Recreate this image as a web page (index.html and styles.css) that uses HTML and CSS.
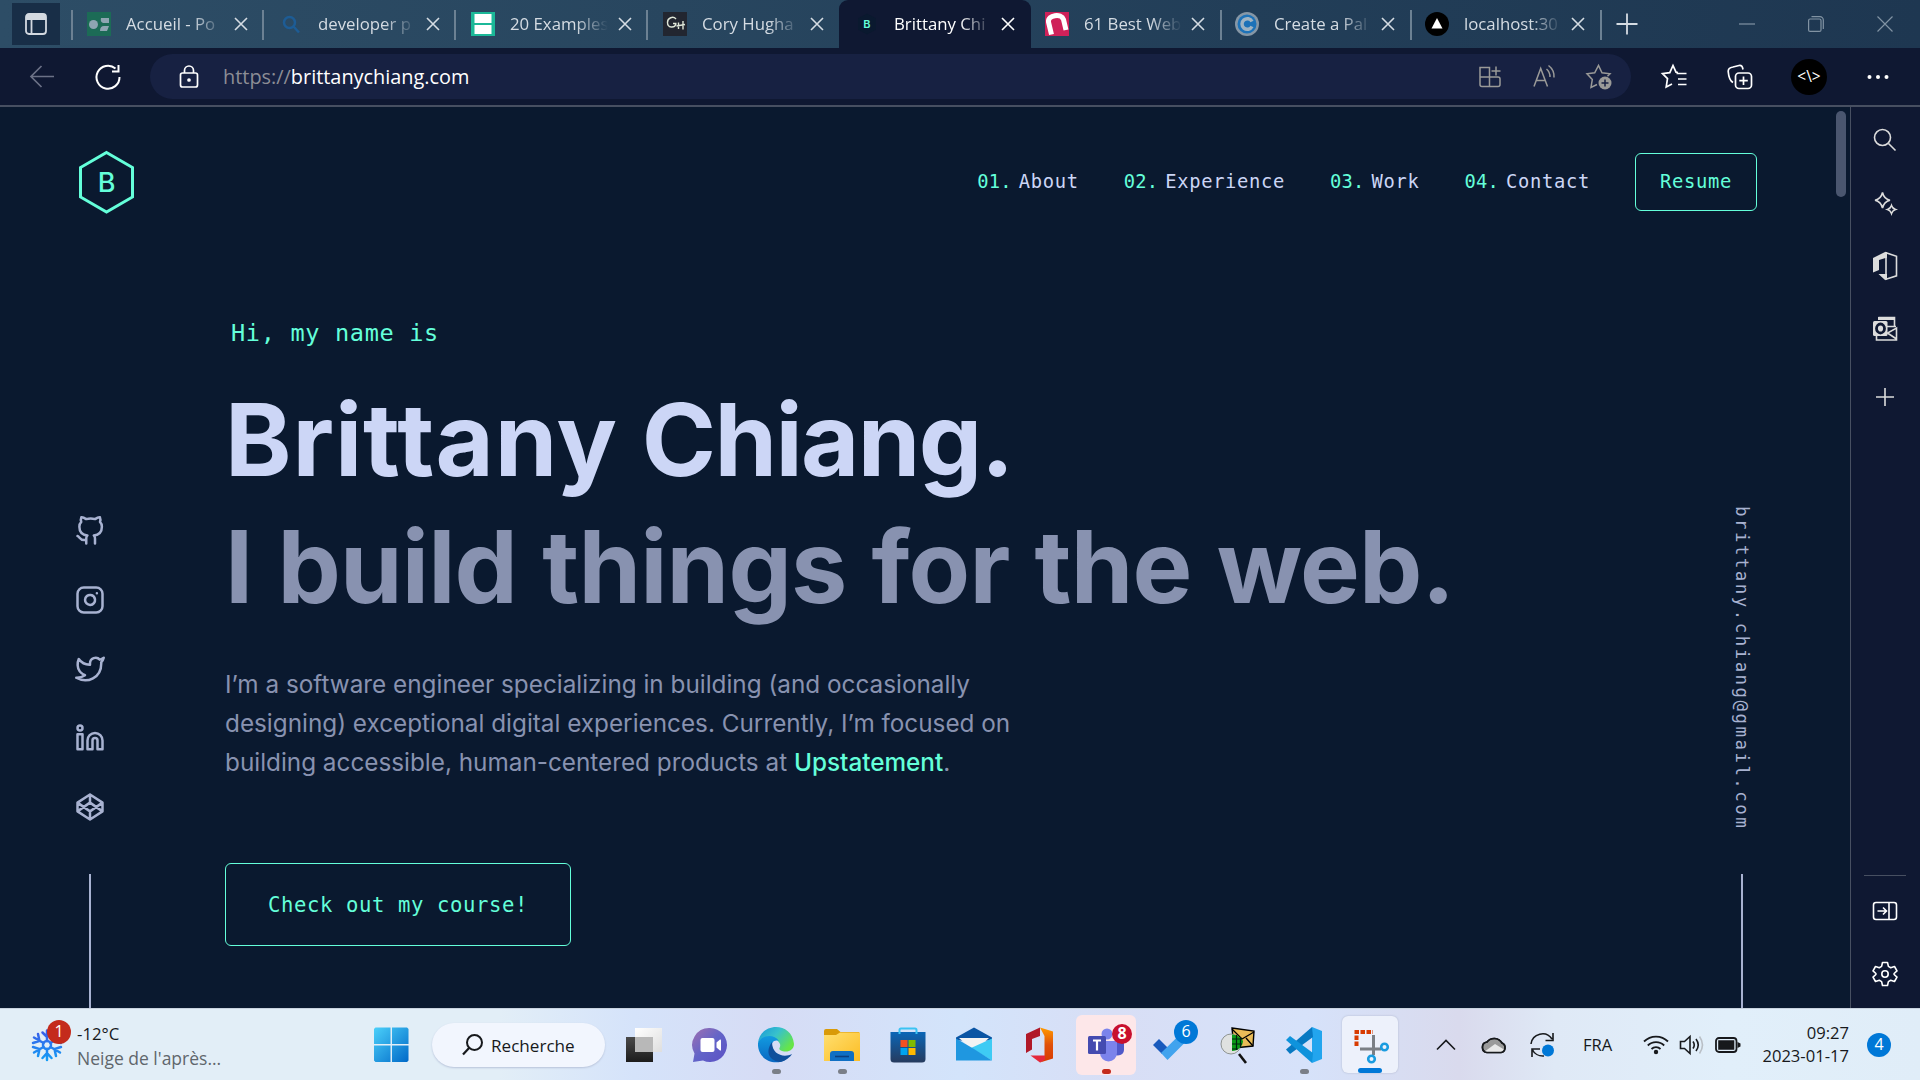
FILE: index.html
```html
<!DOCTYPE html>
<html lang="en">
<head>
<meta charset="utf-8">
<title>Brittany Chiang</title>
<link rel="stylesheet" href="styles.css">
</head>
<body>
<div class="tabstrip">
  <div class="tab-actions"><svg width="24" height="24" viewBox="0 0 24 24"><rect x="2" y="2" width="20" height="20" rx="3" fill="none" stroke="#d3d9e0" stroke-width="1.8"/><path d="M2 5a3 3 0 0 1 3-3h14a3 3 0 0 1 3 3v3H2z" fill="#d3d9e0"/><path d="M7.500 8v14" stroke="#d3d9e0" stroke-width="1.800"/></svg></div>
  <div class="tab">
    <svg class="favicon" viewBox="0 0 24 24"><path fill="#1c6b56" d="M0 0h24v24H0z"/><circle cx="6.500" cy="12.500" r="4.500" fill="#8ea5b2"/><path fill="#8ea5b2" d="M14 6h8v5h-6q-3-1-2-5zM13 19q0-5 4-5h5l-2 5z"/></svg>
    <span class="tab-title">Accueil - Po</span><svg class="close" viewBox="0 0 14 14"><path d="M1 1l12 12M13 1L1 13"/></svg>
  </div>
  <div class="tab">
    <svg class="favicon" viewBox="0 0 24 24"><g fill="none" stroke="#1d5c95" stroke-width="2.500"><circle cx="10.500" cy="10.500" r="5.500"/><path d="M14.500 14.500l5.500 6"/></g></svg>
    <span class="tab-title">developer p</span><svg class="close" viewBox="0 0 14 14"><path d="M1 1l12 12M13 1L1 13"/></svg>
  </div>
  <div class="tab">
    <svg class="favicon" viewBox="0 0 24 24"><path fill="#1bb898" d="M0 0h24v24H0z"/><path fill="#fff" d="M3.500 2h17v9h-17zM3.500 13h17v9h-17z"/></svg>
    <span class="tab-title">20 Examples</span><svg class="close" viewBox="0 0 14 14"><path d="M1 1l12 12M13 1L1 13"/></svg>
  </div>
  <div class="tab no-sep">
    <svg class="favicon" viewBox="0 0 24 24"><path fill="#222630" d="M0 0h24v24H0z"/><path d="M13 7C10 3.500 4.500 6 4.500 10.500c0 5.500 7 6 8.500 1.500M10 11.500h3.500M15.500 10.500v6.500M20 9v8.500M13.500 14l8.500-1.500" fill="none" stroke="#dfe7d8" stroke-width="1.400"/></svg>
    <span class="tab-title">Cory Hugha</span><svg class="close" viewBox="0 0 14 14"><path d="M1 1l12 12M13 1L1 13"/></svg>
  </div>
  <div class="tab active no-sep">
    <svg class="favicon" viewBox="0 0 24 24"><path d="M12 1.500l9 5v11l-9 5-9-5v-11z" fill="#0a192f"/><text x="12" y="16.300" class="fav-b">B</text></svg>
    <span class="tab-title">Brittany Chi</span><svg class="close" viewBox="0 0 14 14"><path d="M1 1l12 12M13 1L1 13"/></svg>
  </div>
  <div class="tab narrow">
    <svg class="favicon" viewBox="0 0 24 24"><path fill="#cf2159" d="M0 0h24v24H0z"/><path d="M6.500 22.500L3.500 10C2.500 3 16.500 1 18.500 7.500L21 18" fill="none" stroke="#fff" stroke-width="5"/></svg>
    <span class="tab-title">61 Best Web</span><svg class="close" viewBox="0 0 14 14"><path d="M1 1l12 12M13 1L1 13"/></svg>
  </div>
  <div class="tab narrow">
    <svg class="favicon" viewBox="0 0 24 24"><circle cx="12" cy="12" r="12" fill="#8697a6"/><circle cx="12" cy="12" r="9.500" fill="#1d72b8"/><path d="M17 9.500a5.300 5.300 0 1 0 0 5" fill="none" stroke="#9fb3c2" stroke-width="3.500"/></svg>
    <span class="tab-title">Create a Pal</span><svg class="close" viewBox="0 0 14 14"><path d="M1 1l12 12M13 1L1 13"/></svg>
  </div>
  <div class="tab narrow">
    <svg class="favicon" viewBox="0 0 24 24"><circle cx="12" cy="12" r="12"/><path fill="#fff" d="M12 6l5.500 10.500h-11z"/></svg>
    <span class="tab-title">localhost:30</span><svg class="close" viewBox="0 0 14 14"><path d="M1 1l12 12M13 1L1 13"/></svg>
  </div>
  <svg class="new-tab" width="22" height="22" viewBox="0 0 22 22"><path d="M11 .5v21M.5 11h21"/></svg>
  <div class="win-controls">
    <svg width="16" height="16" viewBox="0 0 16 16"><path d="M0 8h16"/></svg>
    <svg width="16" height="16" viewBox="0 0 16 16"><rect x=".6" y="3" width="12.400" height="12.400" rx="1.500"/><path d="M3.500 .7h8.500a3.300 3.300 0 0 1 3.300 3.300v9"/></svg>
    <svg width="16" height="16" viewBox="0 0 16 16"><path d="M.5 .5l15 15M15.500 .5l-15 15"/></svg>
  </div>
</div>

<div class="toolbar">
  <svg class="ico dim" viewBox="0 0 26 26"><path d="M25 12.500H2M12.500 2L2 12.500 12.500 23"/></svg>
  <svg class="ico reload" viewBox="0 0 26 26"><path d="M24.500 13A11.500 11.500 0 1 1 20.500 4.500M23.500 1v6.500H17" stroke-width="2"/></svg>
  <div class="address">
    <svg class="lock" viewBox="0 0 20 24"><rect x="1.500" y="8" width="17" height="14" rx="2"/><path d="M5.500 8V5.500a4.500 4.500 0 0 1 9 0V8"/><circle cx="10" cy="15" r="1" fill="#fff"/></svg>
    <span class="url"><span class="scheme">https://</span>brittanychiang.com</span>
    <div class="address-tools">
      <svg width="24" height="24" viewBox="0 0 24 24"><path d="M2 2.500h9.500v19H4q-2 0-2-2zM2 12h18q2 0 2 2v5.500q0 2-2 2h-8.500M18 1.500v9M13.500 6h9"/></svg>
      <svg width="24" height="24" viewBox="0 0 24 24"><path d="M2 21.500L8.700 3.500 15.500 21.500M4.500 15.500h8.500M14.500 4q3.500 3 3.500 8M16.500 .5q6 4.500 5.500 12"/></svg>
      <svg width="26" height="26" viewBox="0 0 26 26"><path d="M11 20.500L5 23.500l1.300-8L1 9.800l7.700-1L12.500 1.500 16 8.800l8 1-2.500 2.500"/><circle cx="19" cy="19" r="6.500" fill="#9a9a98" stroke="none"/><path d="M19 15.500v7M15.500 19h7" stroke="#172142"/></svg>
    </div>
  </div>
  <svg class="ico fav" viewBox="0 0 26 26"><path d="M17 8.500l-2-.3L12 1.500 8.800 8.700l-7.300.9 5 5-1.300 8.400L11 20M15.500 9.500h10M17 15h8.500M17 20.500h8.500"/></svg>
  <svg class="ico coll" viewBox="0 0 26 26"><rect x="8.500" y="9" width="16" height="15.500" rx="3.500"/><path d="M16.500 12.500v8.500M12.300 16.700h8.500M6 18.500C3 17 1.500 11 1.200 7.500 1 4.500 3 3.500 6 3l6-1.500c2.500-.5 3.500 1 4 4"/></svg>
  <div class="avatar">&lt;\&gt;</div>
  <svg class="ico more" viewBox="0 0 26 26"><g fill="#fff" stroke="none"><circle cx="4.500" cy="13" r="2"/><circle cx="13" cy="13" r="2"/><circle cx="21.500" cy="13" r="2"/></g></svg>
</div>

<div class="workspace">
  <div class="page">
    <header class="site-header">
      <svg class="logo" width="56" height="64" viewBox="0 0 56 64"><path d="M28.500 2.500L54.500 17.500v29.500L28.500 62 2.500 47V17.500z" fill="none" stroke="#64ffda" stroke-width="3"/><text x="28.500" y="42">B</text></svg>
      <nav class="nav">
        <a><span class="num">01.</span>About</a>
        <a><span class="num">02.</span>Experience</a>
        <a><span class="num">03.</span>Work</a>
        <a><span class="num">04.</span>Contact</a>
        <a class="resume">Resume</a>
      </nav>
    </header>
    <div class="site-body">
      <aside class="rail">
        <div class="socials">
          <svg viewBox="0 0 24 24"><path d="M9 19c-5 1.500-5-2.500-7-3m14 6v-3.870a3.370 3.370 0 0 0-.94-2.610c3.140-.35 6.440-1.540 6.440-7A5.440 5.440 0 0 0 20 4.770 5.070 5.070 0 0 0 19.910 1S18.730.65 16 2.480a13.380 13.380 0 0 0-7 0C6.270.65 5.090 1 5.090 1A5.070 5.070 0 0 0 5 4.770a5.440 5.440 0 0 0-1.500 3.780c0 5.420 3.300 6.610 6.440 7A3.370 3.370 0 0 0 9 18.130V22"/></svg>
          <svg viewBox="0 0 24 24"><rect x="2" y="2" width="20" height="20" rx="5"/><path d="M16 11.370A4 4 0 1 1 12.630 8 4 4 0 0 1 16 11.370zM17.500 6.500h.01"/></svg>
          <svg viewBox="0 0 24 24"><path d="M23 3a10.900 10.900 0 0 1-3.140 1.530 4.480 4.480 0 0 0-7.860 3v1A10.660 10.660 0 0 1 3 4s-4 9 5 13a11.640 11.640 0 0 1-7 2c9 5 20 0 20-11.500a4.500 4.500 0 0 0-.08-.83A7.720 7.720 0 0 0 23 3z"/></svg>
          <svg viewBox="0 0 24 24"><path d="M16 8a6 6 0 0 1 6 6v7h-4v-7a2 2 0 0 0-2-2 2 2 0 0 0-2 2v7h-4v-7a6 6 0 0 1 6-6z"/><rect x="2" y="9" width="4" height="12"/><circle cx="4" cy="4" r="2"/></svg>
          <svg viewBox="0 0 24 24"><path d="M12 2l10 6.500v7L12 22 2 15.500v-7zM12 22v-6.500M22 8.500l-10 7-10-7M2 15.500l10-7 10 7M12 2v6.500"/></svg>
        </div>
        <div class="rail-line"></div>
      </aside>
      <main class="hero">
        <p class="hello">Hi, my name is</p>
        <h1><span class="given">Brittany</span> <span class="family">Chiang</span>.</h1>
        <h2>I build things for the web.</h2>
        <p class="intro">I’m a software engineer specializing in building (and occasionally<br>designing) exceptional digital experiences. Currently, I’m focused on<br>building accessible, human-centered products at <a>Upstatement</a>.</p>
        <a class="cta">Check out my course!</a>
      </main>
      <aside class="rail">
        <div class="email">brittany.chiang@gmail.com</div>
        <div class="rail-line"></div>
      </aside>
    </div>
    <div class="scroll-thumb"></div>
  </div>
  <div class="sidebar">
    <svg viewBox="0 0 28 28"><circle cx="11.500" cy="11.500" r="8"/><path d="M17.500 17.500l7 7"/></svg>
    <svg viewBox="0 0 28 28"><path d="M11.500 3.500Q13 10 19 11.200 13 12.500 11.500 19 10 12.500 4 11.200 10 10 11.500 3.500zM20.500 16.500q1 3 4 4-3 1-4 4-1-3-4-4 3-1 4-4z"/></svg>
    <svg viewBox="0 0 28 28"><path d="M14 0L2 6v14.500l6-2.500V8l8-2.500V22H7.500L14 28l2-.5V0z" fill="#dcdcdc" stroke="none"/><path d="M15 .8l10.500 3.500v19.500L15 27.200z"/></svg>
    <svg viewBox="0 0 28 28"><path d="M7.500 2.500h16v9M5.500 21v4h20V13l-9 5 9 6M16 11.500h9"/><path d="M7 2h17v3H7zM15 6v13h-2V6z" fill="#dcdcdc" stroke="none"/><rect x="2" y="6" width="14.500" height="15" rx="1.500" fill="#dcdcdc" stroke="none"/><ellipse cx="9.500" cy="13.500" rx="4" ry="4.500" fill="#dcdcdc" stroke="#0f1832" stroke-width="2.800"/></svg>
    <svg class="add" viewBox="0 0 28 28"><path d="M14 5v18M5 14h18"/></svg>
    <div class="sidebar-foot">
      <svg viewBox="0 0 28 28"><rect x="2.500" y="5.500" width="23" height="17" rx="2.500"/><path d="M18 5.500v17M6.500 14h9M12 10.500l3.500 3.500-3.500 3.500"/></svg>
      <svg viewBox="0 0 28 28"><circle cx="14" cy="14" r="3.200"/><path d="M11.500 2.500h5l.9 3.900 2.300 1.300 3.800-1.200 2.500 4.300-2.900 2.700v1l2.900 2.700-2.500 4.300-3.800-1.200-2.300 1.300-.9 3.900h-5l-.9-3.900-2.300-1.300-3.800 1.200L2 17.200l2.900-2.700v-1L2 10.800l2.500-4.300 3.800 1.200 2.300-1.300z" stroke-linejoin="round"/></svg>
    </div>
  </div>
</div>

<div class="taskbar">
  <div class="weather">
    <svg width="34" height="34" viewBox="0 0 34 34"><defs><linearGradient id="sn" gradientUnits="userSpaceOnUse" x1="0" y1="2" x2="0" y2="32"><stop offset="0" stop-color="#3b5be8"/><stop offset="1" stop-color="#159cf5"/></linearGradient></defs><g fill="none" stroke="url(#sn)" stroke-width="2.500" stroke-linecap="round"><circle cx="17" cy="17" r="4"/><path d="M17 13V2.500M17 21v11M13.500 15L4 9.500M20.500 15L30 9.500M13.500 19L4 24.500M20.500 19l9.500 5.500M12.500 4.500L17 9l4.500-4.500M12.500 30l4.500-5 4.500 5M3 15l6.500-2L8 6M31 15l-6.500-2L26 6M3 19l6.500 2L8 28M31 19l-6.500 2L26 28"/></g></svg>
    <span class="badge red">1</span>
    <div class="weather-text"><div>-12°C</div><div class="sub">Neige de l'après...</div></div>
  </div>
  <svg class="start" width="35" height="36" viewBox="0 0 36 36"><defs><linearGradient id="w" x1="0" y1="0" x2="1" y2="1"><stop offset="0" stop-color="#4bd0fa"/><stop offset="1" stop-color="#0069c8"/></linearGradient></defs><path fill="url(#w)" d="M1.500 0H17v17H0V1.500zM18.500 0H34l1.500 1.500V17h-17zM0 18.500h17v17H1.500L0 34zM18.500 18.500h17V34L34 35.500H18.500z"/></svg>
  <div class="search"><svg width="22" height="22" viewBox="0 0 22 22"><circle cx="12.500" cy="8.500" r="7.500" fill="none" stroke="#17191c" stroke-width="2"/><path d="M7.500 13.500L1 20.500" stroke="#17191c" stroke-width="2.200"/></svg>Recherche</div>
  <div class="apps">
    <div class="app"><svg viewBox="0 0 36 36"><defs><linearGradient id="tv" x1="0" y1="0" x2="0" y2="1"><stop offset="0" stop-color="#4a4a4a"/><stop offset="1" stop-color="#1c1c1c"/></linearGradient><linearGradient id="tw" x1="0" y1="0" x2="1" y2="1"><stop offset="0" stop-color="#fff"/><stop offset="1" stop-color="#dedede"/></linearGradient></defs><path d="M0 10h27v25H0z" fill="url(#tv)"/><path d="M9 1h27v24H9z" fill="url(#tw)"/><path d="M9 10h18v15H9z" fill="#b8b8b8"/></svg></div>
    <div class="app"><svg viewBox="0 0 36 36"><defs><linearGradient id="ch" x1="0" y1="0" x2="1" y2="1"><stop offset="0" stop-color="#a070b0"/><stop offset=".5" stop-color="#6264c8"/><stop offset="1" stop-color="#5c50c4"/></linearGradient></defs><path d="M18 1a17 17 0 1 1-7 32.500L1 35l1.500-8.500A17 17 0 0 1 18 1z" fill="url(#ch)"/><rect x="8.500" y="11" width="14" height="14" rx="2" fill="#fff"/><path d="M24.500 15.500l3.500-3q1-.5 1 1v9q0 1.500-1 1l-3.500-3z" fill="#fff"/></svg></div>
    <div class="app run"><svg viewBox="0 0 36 36"><defs><linearGradient id="e1" x1="0" y1="0" x2="1" y2=".6"><stop offset="0" stop-color="#1897d8"/><stop offset=".5" stop-color="#38c1cc"/><stop offset="1" stop-color="#66e548"/></linearGradient><linearGradient id="e2" x1="0" y1="0" x2="0" y2="1"><stop offset="0" stop-color="#129be0"/><stop offset="1" stop-color="#0967c2"/></linearGradient></defs><path d="M0 16C2-5 34-6 36 17c0 7-8 9.500-14 6-2-1.500 1-2.500 0-6C19 10 6 6 0 16z" fill="url(#e1)"/><path d="M0 16c3-8 16-10 21-2-7-2-8 4-7 9 2 7 9 8 14 9.500C16 40-1 32 0 16z" fill="url(#e2)"/><path d="M14 15c-6 8-5 18 8 20 6-1 10-5 12-8-8 4-20 1-20-12z" fill="#0f4f9c"/></svg></div>
    <div class="app run"><svg viewBox="0 0 36 36"><defs><linearGradient id="fo" x1="0" y1="0" x2="1" y2="1"><stop offset="0" stop-color="#ffdf70"/><stop offset="1" stop-color="#fcbd24"/></linearGradient></defs><path d="M0 4q0-2 2-2h11l3.500 3H35l1 3H0z" fill="#d99a08"/><path d="M0 8h12l4-2.500h20V34H0z" fill="url(#fo)"/><path d="M6 34V27q0-3 3-3h18q3 0 3 3v7z" fill="#0f6fc4"/><path d="M11 29.500h14" stroke="#0b3f80" stroke-width="1.600"/></svg></div>
    <div class="app"><svg viewBox="0 0 36 36"><defs><linearGradient id="st" x1="0" y1="0" x2="0" y2="1"><stop offset="0" stop-color="#0a66b7"/><stop offset="1" stop-color="#263b5e"/></linearGradient></defs><path d="M.5 5h35v27q0 3.500-3.500 3.500H4Q.5 35.500.5 32z" fill="url(#st)"/><path d="M9.500 7V3q0-1.500 1.500-1.500h14q1.500 0 1.500 1.500v4" fill="none" stroke="#3bc3f3" stroke-width="2"/><path fill="#f25022" d="M10.500 13h7v7h-7z"/><path fill="#7fba00" d="M18.500 13h7v7h-7z"/><path fill="#00a4ef" d="M10.500 21h7v7h-7z"/><path fill="#ffb900" d="M18.500 21h7v7h-7z"/></svg></div>
    <div class="app"><svg viewBox="0 0 36 36"><path d="M0 10.500L18 .5l18 10v3H0z" fill="#0a55a4"/><path d="M3 11h30L18 24z" fill="#f3f3f3"/><path d="M36 11.500v22L15 21z" fill="#3ecbf4"/><path d="M0 11.500v22h36L18 22z" fill="#1f97e0"/></svg></div>
    <div class="app"><svg viewBox="0 0 36 36"><defs><linearGradient id="of" x1="0" y1="0" x2="0" y2="1"><stop offset="0" stop-color="#ff9a00"/><stop offset=".5" stop-color="#e0500a"/><stop offset="1" stop-color="#d83b01"/></linearGradient></defs><path d="M18 .5L4 7v19l6-3.500V12l8-3z" fill="#b01828"/><path d="M18 .5l13 4v27L18 35.500l4.500-4V9z" fill="url(#of)"/><path d="M8.500 28.500H23v4l-5 3z" fill="#e4283c"/></svg></div>
    <div class="app teams run alert"><svg viewBox="0 0 36 36"><circle cx="19" cy="7" r="5.500" fill="#7b83eb"/><path d="M22 14h14v9a6 6 0 0 1-10 4z" fill="#5059c9"/><path d="M12 14h17v12a8.500 8.500 0 0 1-17 0z" fill="#7b83eb"/><rect x="0" y="9" width="18" height="18" rx="1.500" fill="#444bb0"/><path d="M5 13.500h8M9 13.500v10" stroke="#fff" stroke-width="2.200"/></svg><span class="badge crimson">8</span></div>
    <div class="app todo"><svg viewBox="0 0 36 36"><path d="M-1 18l6-6 9 9-6 6z" fill="#185abd"/><path d="M7 26L28 5.500l6.500 6.500L13.500 33z" fill="#41a3ee"/></svg><span class="badge blue">6</span></div>
    <div class="app"><svg viewBox="0 0 36 36"><path d="M12 1l22 3-1 15-19 2z" fill="#e9bc58" stroke="#000" stroke-width="1.400"/><path d="M12 2l10 10 12-7M33 19l-7-8" fill="none" stroke="#000" stroke-width="1.300"/><circle cx="11" cy="17" r="10" fill="#dfe1e0" stroke="#8f9492"/><path d="M12 7.500V24c6 0 11-5 11-10-3-5-7-6-11-6.500z" fill="#0a9a18"/><path d="M12 12h10M12 17h10M12 22h6M16.500 8v15M20.500 10v11" stroke="#021" stroke-width="1.200"/><path d="M19 27l7 9" stroke="#111" stroke-width="2.600"/></svg></div>
    <div class="app run"><svg viewBox="0 0 36 36"><path d="M26 0l10 4v28l-10 4z" fill="#22a5ee"/><path d="M26 0L0 22.500 4 27 27 10z" fill="#0879c2"/><path d="M26 36L0 13l4-4 23 17z" fill="#0f93dc"/></svg></div>
    <div class="app snip selected"><svg viewBox="0 0 36 36"><path d="M2.500 19V5H19" fill="none" stroke="#d83b01" stroke-width="4" stroke-dasharray="4.500 1.500"/><path d="M19.500 8v20M6 22h21" stroke="#7b7f85" stroke-width="3"/><g fill="none" stroke="#1a9ce0" stroke-width="2.600"><circle cx="30.500" cy="20" r="3.300"/><circle cx="17.500" cy="32" r="3.300"/></g></svg></div>
  </div>
  <div class="tray">
    <svg class="chev" width="20" height="12" viewBox="0 0 20 12"><path d="M1 10.500l9-9 9 9"/></svg>
    <svg class="cloud" width="26" height="18" viewBox="0 0 26 18"><path d="M6 16.500h14a5 5 0 0 0 1-9.500A9 9 0 0 0 6 6a5.300 5.300 0 0 0 0 10.500z" fill="#9a9a9a"/><path d="M3 16L14 8l9 5.500q-1 3-3 3H5z" fill="#e8e8e8" stroke="none"/><path d="M6 16.500h14a5 5 0 0 0 1-9.500A9 9 0 0 0 6 6a5.300 5.300 0 0 0 0 10.500z"/></svg>
    <svg class="sync" width="26" height="26" viewBox="0 0 26 26"><path d="M2 12A11.500 11.500 0 0 1 23 7M24 1v7.500h-7.500M3 25v-8h8M3 17a12 12 0 0 0 12 7"/><circle cx="19" cy="18.500" r="6" fill="#0078d7" stroke="none"/></svg>
    <span class="lang">FRA</span>
    <svg class="wifi" width="26" height="20" viewBox="0 0 26 20"><path d="M1 6.500a17 17 0 0 1 24 0M4.800 10.500a11.500 11.500 0 0 1 16.400 0M8.500 14a6.500 6.500 0 0 1 9 0" stroke-width="1.800"/><circle cx="13" cy="17" r="2.200" fill="#17191c" stroke="none"/></svg>
    <svg class="vol" width="26" height="20" viewBox="0 0 26 20"><path d="M1.500 6.500h4L11 1.500v17l-5.500-5h-4zM14 6.500q2.500 3.500 0 7M17 4q4.500 6 0 12"/><path d="M20.500 1.500q6 8.500 0 17" stroke="#b9bfc6"/></svg>
    <svg class="bat" width="26" height="16" viewBox="0 0 26 16"><rect x="1" y="1" width="20.500" height="14" rx="3" stroke-width="1.800"/><path d="M4 4h14.500v8H4z" fill="#17191c"/><path d="M22.500 5l3 1.500v3L22.500 11z" fill="#17191c" stroke="none"/></svg>
    <div class="clock"><div>09:27</div><div>2023-01-17</div></div>
    <span class="badge count">4</span>
  </div>
</div>
</body>
</html>
```
FILE: styles.css
```css
* { box-sizing: border-box; }
body { margin: 0; width: 1920px; height: 1080px; overflow: hidden; background: #0a192f; font-family: "Open Sans", "Noto Sans", sans-serif; display: flex; flex-direction: column; }
h1, h2, p { margin: 0; }
svg { display: block; flex: none; overflow: visible; }

/* Tab strip */
.tabstrip { height: 48px; flex: none; display: flex; align-items: center; background: linear-gradient(90deg, #2d4d66 0%, #28465f 35%, #223e58 65%, #1e3751 100%); }
.tab-actions { width: 48px; height: 42px; margin: 0 11px 0 12px; background: #182e47; display: flex; align-items: center; justify-content: center; }
.tab { width: 192px; height: 48px; padding-left: 16px; display: flex; align-items: center; position: relative; color: #d5dce3; font-size: 16.8px; }
.tab.narrow { width: 190px; padding-left: 14px; }
.tab:not(.no-sep)::after { content: ""; position: absolute; right: -1px; top: 10px; width: 2px; height: 30px; background: #6c8193; }
.tab-actions + .tab { background: linear-gradient(#6c8193, #6c8193) no-repeat 0 10px / 2px 30px; }
.tab.active { background: #0f1832; color: #fff; border-radius: 9px 9px 0 0; }
.favicon { width: 24px; height: 24px; margin-right: 15px; }
.fav-b { font: 600 11px "Inter", sans-serif; fill: #64ffda; text-anchor: middle; }
.tab-title { width: 100px; margin-right: 8px; white-space: nowrap; line-height: 26px; -webkit-mask-image: linear-gradient(90deg, #000 66%, transparent 98%); mask-image: linear-gradient(90deg, #000 66%, transparent 98%); }
.active .tab-title, .narrow .tab-title { margin-right: 7px; }
.close { width: 14px; height: 14px; stroke: currentColor; stroke-width: 1.6; }
.new-tab { margin-left: 15px; stroke: #d5dce3; stroke-width: 1.8; }
.win-controls { margin-left: auto; padding-right: 27px; display: flex; gap: 53px; fill: none; stroke: #8193a3; stroke-width: 1.2; }

/* Toolbar */
.toolbar { height: 59px; flex: none; display: flex; align-items: center; background: #0f1832; border-bottom: 2px solid #474f61; padding-left: 29px; }
.ico { width: 26px; height: 26px; fill: none; stroke: #fff; stroke-width: 1.7; }
.dim { stroke: #6b7186; }
.reload { margin-left: 40px; }
.address { width: 1481px; height: 45px; margin-left: 29px; border-radius: 23px; background: #172142; display: flex; align-items: center; padding: 0 19px 0 29px; }
.lock { width: 20px; height: 24px; fill: none; stroke: #fff; stroke-width: 1.7; }
.url { margin-left: 24px; font-size: 19.9px; line-height: 30px; color: #fff; }
.scheme { color: #8c8d95; }
.address-tools { margin-left: auto; display: flex; align-items: center; gap: 30px; fill: none; stroke: #9a9a98; stroke-width: 1.5; }
.fav { margin-left: 30px; }
.coll { margin-left: 40px; }
.avatar { width: 36px; height: 36px; margin-left: 38px; border-radius: 50%; background: #000; color: #fff; font: 15.5px/34px "Open Sans", sans-serif; text-align: center; }
.more { margin-left: 38px; }

.workspace { flex: 1; display: flex; min-height: 0; }

/* Portfolio page */
.page { width: 1850px; position: relative; background: #0a192f; color: #8892b0; display: flex; flex-direction: column; }
.site-header { height: 150px; display: flex; justify-content: space-between; align-items: center; padding: 0 93px 0 78px; }
.logo text { font: 500 27px "Inter", sans-serif; fill: #64ffda; text-anchor: middle; }
.nav { display: flex; align-items: center; gap: 45px; font: 18.8px/24px "DejaVu Sans Mono", monospace; letter-spacing: 0.68px; color: #ccd6f6; }
.num { color: #64ffda; letter-spacing: 0.2px; margin-right: 7px; }
.resume { width: 122px; height: 58px; line-height: 55px; border: 1px solid #64ffda; border-radius: 6px; text-align: center; color: #64ffda; }
.site-body { flex: 1; display: grid; grid-template-columns: 180px 1fr 216px; }
.rail { display: flex; flex-direction: column; align-items: center; justify-content: flex-end; }
.rail-line { width: 2px; height: 134px; background: #a8b2d1; }
.socials { display: flex; flex-direction: column; gap: 39px; margin-bottom: 52px; }
.socials svg { width: 30px; height: 30px; fill: none; stroke: #a8b2d1; stroke-width: 2; stroke-linecap: round; stroke-linejoin: round; }
.email { writing-mode: vertical-rl; font: 17.4px/24px "DejaVu Sans Mono", monospace; letter-spacing: 2.5px; color: #a8b2d1; margin-bottom: 44px; }
.hero { padding: 61px 0 0 45px; white-space: nowrap; }
.hello { padding-left: 6px; font: 23.6px/30px "DejaVu Sans Mono", monospace; letter-spacing: 0.65px; color: #64ffda; margin-bottom: 28px; }
h1, h2 { font: 700 100.5px/127px "Inter", sans-serif; }
h1 { color: #ccd6f6; }
h2 { color: #8892b0; letter-spacing: -0.8px; word-spacing: 2px; }
.given { letter-spacing: 0.9px; }
.family { letter-spacing: -1.6px; }
.intro { margin-top: 35px; font: 24.3px/39px "Inter", sans-serif; }
.intro a { color: #64ffda; font-weight: 500; }
.cta { display: block; width: 346px; height: 83px; margin-top: 81px; border: 1px solid #64ffda; border-radius: 6px; text-align: center; font: 20.6px/82px "DejaVu Sans Mono", monospace; letter-spacing: 0.6px; color: #64ffda; }
.scroll-thumb { position: absolute; right: 4px; top: 4px; width: 10px; height: 86px; border-radius: 5px; background: #4a566f; }

/* Browser sidebar */
.sidebar { flex: 1; background: #0f1832; border-left: 1px solid #474f61; display: flex; flex-direction: column; align-items: center; gap: 35px; padding: 19px 1px 0 0; fill: none; stroke: #dcdcdc; stroke-width: 1.6; }
.sidebar svg { width: 28px; height: 28px; }
.sidebar .add { margin-top: 5px; }
.sidebar-foot { width: 42px; margin-top: auto; border-top: 1px solid #474f61; padding: 21px 0 20px; display: flex; flex-direction: column; align-items: center; gap: 35px; stroke: #fff; }

/* Taskbar */
.taskbar { height: 72px; flex: none; display: flex; align-items: center; position: relative; border-top: 1px solid #c9d3df; color: #17191c; background: linear-gradient(90deg, #e2eef7 0%, #e2eef7 26%, #d5e3fa 33%, #d6dcf5 40%, #d3e4fb 50%, #d8def5 58%, #d6e2fa 68%, #d9daed 76%, #dfe9f6 81%, #e1effa 90%, #e0edf8 100%); }
.badge { width: 24px; height: 24px; border-radius: 50%; color: #fff; font-size: 16px; line-height: 23px; text-align: center; }
.weather { width: 374px; display: flex; align-items: center; position: relative; padding-left: 30px; font-size: 16.8px; line-height: 24px; }
.weather .badge { position: absolute; left: 47px; top: 0; }
.red { background: #c42b1c; }
.weather-text { margin: 2px 0 0 13px; }
.sub { color: #5f666c; font-size: 17.5px; }
.search { width: 173px; height: 44px; margin-left: 23px; border-radius: 22px; background: #f2f6fe; box-shadow: 0 1px 2px #b8c3da; display: flex; align-items: center; padding: 1px 0 0 30px; gap: 7px; font-size: 17.1px; }
.apps { display: flex; margin-left: 6px; height: 72px; align-items: center; }
.app { width: 66px; height: 60px; display: flex; align-items: center; justify-content: center; position: relative; }
.app svg { width: 36px; height: 36px; }
.run::after, .selected::after { content: ""; position: absolute; left: 29px; bottom: 1px; width: 9px; height: 5px; border-radius: 3px; background: #7a7f88; }
.teams { width: 60px; margin: 0 3px; border-radius: 6px; background: #fde7e9; }
.run.alert::after { left: 26px; background: #c42b1c; }
.app .badge { position: absolute; }
.teams .badge { width: 20px; height: 20px; line-height: 19px; font-weight: 700; left: 36px; top: 9px; }
.crimson { background: #c8102e; }
.todo .badge { left: 35px; top: 5px; }
.blue, .count { background: #0078d7; }
.selected { width: 56px; height: 57px; margin: 0 5px; border-radius: 6px; background: #edf1fb; box-shadow: 0 0 2px #aab2c8; }
.selected svg { margin: 0 0 0 3px; }
.selected::after { left: 16px; bottom: 0; width: 24px; background: #0078d7; }
.tray { flex: 1; display: flex; align-items: center; margin-left: 33px; fill: none; stroke: #17191c; stroke-width: 1.6; font-size: 16.6px; }
.cloud { margin-left: 25px; }
.sync { margin-left: 22px; }
.lang { margin-left: 28px; width: 32px; }
.wifi { margin-left: 28px; }
.vol { margin-left: 10px; }
.bat { margin-left: 10px; }
.clock { width: 88px; margin-left: 20px; text-align: right; line-height: 23px; white-space: nowrap; margin-top: -2px; }
.count { margin-left: 18px; }
```
